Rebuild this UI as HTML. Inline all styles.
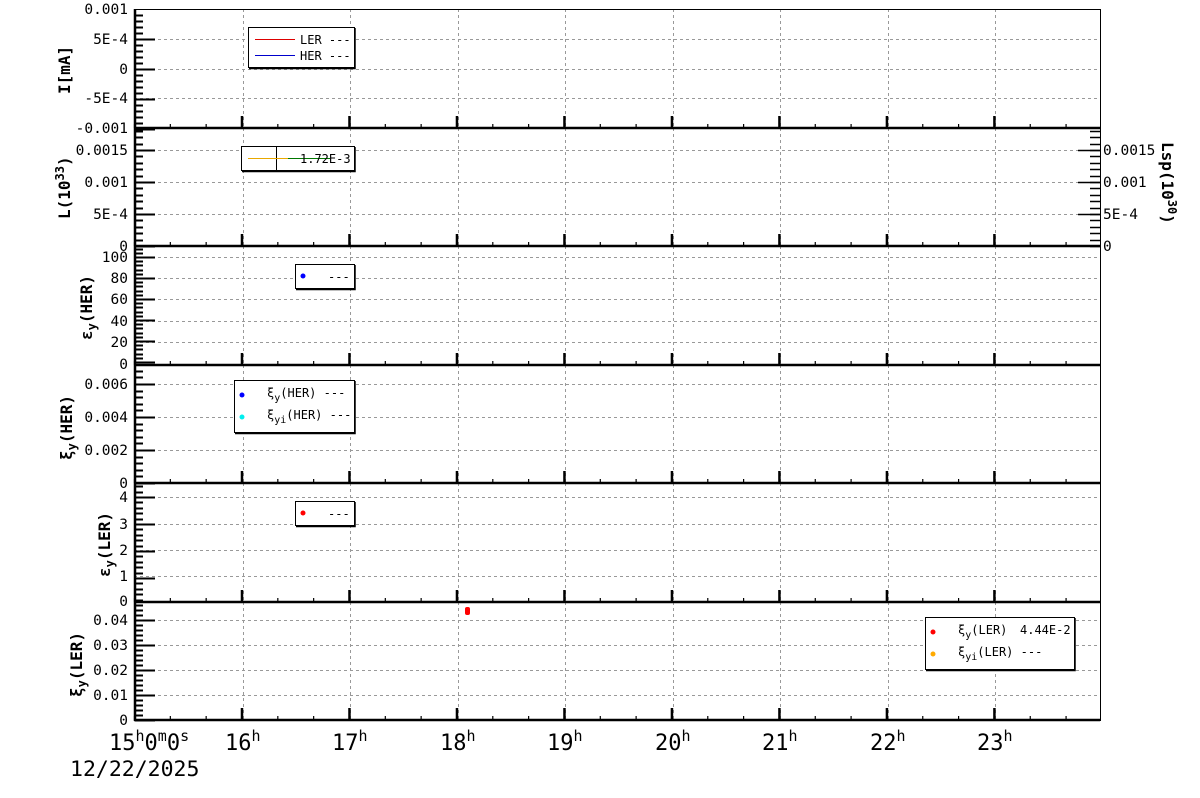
<!DOCTYPE html>
<html><head><meta charset="utf-8"><style>
html,body{margin:0;padding:0;background:#fff;}
svg{display:block;}
text{font-family:"DejaVu Sans Mono","Liberation Mono",monospace;fill:#000;}
.yl{font-size:14.5px;text-anchor:end;}
.yt{font-size:16px;font-weight:bold;}
.lg{font-size:12px;}
.xl{font-size:22px;}
</style></head><body>
<svg id="s" width="1200" height="798" xmlns="http://www.w3.org/2000/svg">
<g id="grid" stroke="#999" stroke-width="1" stroke-dasharray="3,3"></g>
<g id="ticks" stroke="#000"></g>
<rect x="134.5" y="9.5" width="966" height="711" fill="none" stroke="#000" stroke-width="1"/>
<g stroke="#000" stroke-width="2.5">
<line x1="134" y1="128" x2="1100" y2="128"/><line x1="134" y1="246" x2="1100" y2="246"/>
<line x1="134" y1="365" x2="1100" y2="365"/><line x1="134" y1="483" x2="1100" y2="483"/>
<line x1="134" y1="602" x2="1100" y2="602"/><line x1="134" y1="720" x2="1100" y2="720"/>
<line x1="135" y1="9" x2="135" y2="721"/>
</g>
<text class="yl" x="128" y="14">0.001</text><text class="yl" x="128" y="44">5E-4</text>
<text class="yl" x="128" y="74">0</text><text class="yl" x="128" y="103">-5E-4</text><text class="yl" x="128" y="133">-0.001</text>
<text class="yl" x="128" y="155">0.0015</text><text class="yl" x="128" y="187">0.001</text>
<text class="yl" x="128" y="219">5E-4</text><text class="yl" x="128" y="251">0</text>
<text class="yl" x="128" y="262">100</text><text class="yl" x="128" y="283">80</text><text class="yl" x="128" y="304">60</text>
<text class="yl" x="128" y="326">40</text><text class="yl" x="128" y="347">20</text><text class="yl" x="128" y="369">0</text>
<text class="yl" x="128" y="389">0.006</text><text class="yl" x="128" y="422">0.004</text>
<text class="yl" x="128" y="455">0.002</text><text class="yl" x="128" y="488">0</text>
<text class="yl" x="128" y="502">4</text><text class="yl" x="128" y="529">3</text><text class="yl" x="128" y="555">2</text>
<text class="yl" x="128" y="581">1</text><text class="yl" x="128" y="606">0</text>
<text class="yl" x="128" y="625">0.04</text><text class="yl" x="128" y="650">0.03</text>
<text class="yl" x="128" y="675">0.02</text><text class="yl" x="128" y="700">0.01</text><text class="yl" x="128" y="725">0</text>
<text x="1103" y="155" style="font-size:14.5px">0.0015</text><text x="1103" y="187" style="font-size:14.5px">0.001</text>
<text x="1103" y="219" style="font-size:14.5px">5E-4</text><text x="1103" y="251" style="font-size:14.5px">0</text>
<text class="yt" transform="translate(1162,142) rotate(90)">Lsp(10<tspan dy="-6" font-size="12">30</tspan><tspan dy="6">)</tspan></text>
<text class="yt" transform="translate(70,94) rotate(-90)">I[mA]</text>
<text class="yt" transform="translate(70,219) rotate(-90)">L(10<tspan dy="-6" font-size="12">33</tspan><tspan dy="6">)</tspan></text>
<text class="yt" transform="translate(92,340) rotate(-90)">ε<tspan dy="4" font-size="12">y</tspan><tspan dy="-4">(HER)</tspan></text>
<text class="yt" transform="translate(72,460) rotate(-90)">ξ<tspan dy="4" font-size="12">y</tspan><tspan dy="-4">(HER)</tspan></text>
<text class="yt" transform="translate(110,577) rotate(-90)">ε<tspan dy="4" font-size="12">y</tspan><tspan dy="-4">(LER)</tspan></text>
<text class="yt" transform="translate(82,697) rotate(-90)">ξ<tspan dy="4" font-size="12">y</tspan><tspan dy="-4">(LER)</tspan></text>
<text class="xl" x="109" y="750">15<tspan dy="-9" font-size="15">h</tspan><tspan dy="9">0</tspan><tspan dy="-9" font-size="15">m</tspan><tspan dy="9">0</tspan><tspan dy="-9" font-size="15">s</tspan></text>
<text class="xl" x="225" y="750">16<tspan dy="-9" font-size="15">h</tspan></text>
<text class="xl" x="332" y="750">17<tspan dy="-9" font-size="15">h</tspan></text>
<text class="xl" x="440" y="750">18<tspan dy="-9" font-size="15">h</tspan></text>
<text class="xl" x="547" y="750">19<tspan dy="-9" font-size="15">h</tspan></text>
<text class="xl" x="655" y="750">20<tspan dy="-9" font-size="15">h</tspan></text>
<text class="xl" x="762" y="750">21<tspan dy="-9" font-size="15">h</tspan></text>
<text class="xl" x="870" y="750">22<tspan dy="-9" font-size="15">h</tspan></text>
<text class="xl" x="977" y="750">23<tspan dy="-9" font-size="15">h</tspan></text>
<text class="xl" x="70" y="776" style="font-size:21.5px">12/22/2025</text>
<g fill="#fff" stroke="#000" stroke-width="1">
<rect x="248.5" y="27.5" width="106" height="40"/>
<rect x="241.5" y="146.5" width="113" height="24"/>
<rect x="295.5" y="264.5" width="59" height="24"/>
<rect x="234.5" y="380.5" width="120" height="52"/>
<rect x="295.5" y="501.5" width="59" height="24"/>
<rect x="925.5" y="617.5" width="149" height="52"/>
</g>
<g stroke="#000" stroke-width="1.5">
<polyline fill="none" points="355,28 355,68.5 249,68.5"/>
<polyline fill="none" points="355,147 355,171.5 242,171.5"/>
<polyline fill="none" points="355,265 355,289.5 296,289.5"/>
<polyline fill="none" points="355,381 355,433.5 235,433.5"/>
<polyline fill="none" points="355,502 355,526.5 296,526.5"/>
<polyline fill="none" points="1075,618 1075,670.5 926,670.5"/>
</g>
<line x1="255" y1="39.5" x2="295" y2="39.5" stroke="#d00"/>
<line x1="255" y1="55.5" x2="295" y2="55.5" stroke="#00c"/>
<text class="lg" x="300" y="44">LER ---</text><text class="lg" x="300" y="60">HER ---</text>
<line x1="276.5" y1="147" x2="276.5" y2="171" stroke="#000"/>
<line x1="248" y1="158.5" x2="288" y2="158.5" stroke="#e8a800"/>
<line x1="288" y1="158.5" x2="330" y2="158.5" stroke="#070"/>
<text class="lg" x="300" y="163">1.72E-3</text>
<circle cx="303" cy="276" r="2.5" fill="#00f"/><text class="lg" x="328" y="281">---</text>
<circle cx="242" cy="395" r="2.5" fill="#00f"/><circle cx="242" cy="417" r="2.5" fill="#0ee"/>
<text class="lg" x="267" y="397">ξ<tspan dy="4" font-size="10">y</tspan><tspan dy="-4">(HER) ---</tspan></text>
<text class="lg" x="267" y="419">ξ<tspan dy="4" font-size="10">yi</tspan><tspan dy="-4">(HER) ---</tspan></text>
<circle cx="303" cy="513" r="2.5" fill="#f00"/><text class="lg" x="328" y="518">---</text>
<circle cx="933" cy="632" r="2.5" fill="#f00"/><circle cx="933" cy="654" r="2.5" fill="#fa0"/>
<text class="lg" x="958" y="634">ξ<tspan dy="4" font-size="10">y</tspan><tspan dy="-4">(LER)</tspan></text>
<text class="lg" x="1020" y="634">4.44E-2</text>
<text class="lg" x="958" y="656">ξ<tspan dy="4" font-size="10">yi</tspan><tspan dy="-4">(LER) ---</tspan></text>
<rect x="465" y="607" width="5" height="8" rx="2" fill="#f00"/>
</svg>
<script>
var NS="http://www.w3.org/2000/svg";
function L(g,x1,y1,x2,y2,w){var l=document.createElementNS(NS,"line");l.setAttribute("x1",x1);l.setAttribute("y1",y1);l.setAttribute("x2",x2);l.setAttribute("y2",y2);if(w)l.setAttribute("stroke-width",w);document.getElementById(g).appendChild(l);}
var hx=[243,350,458,565,673,780,888,995];
var panels=[[9,128],[128,246],[246,365],[365,483],[483,602],[602,720]];
var ygrid=[[39,69,98],[150,182,214],[257,278,299,321,342],[384,417,450],[497,524,550,576],[620,645,670,695]];
panels.forEach(function(p,i){
 hx.forEach(function(x){L("grid",x+.5,p[0],x+.5,p[1]);});
 ygrid[i].forEach(function(y){L("grid",134,y+.5,1100,y+.5);});
 for(var x=134;x<1100;x+=35.83){var major=hx.some(function(h){return Math.abs(h-x)<3});
  L("ticks",x+.5,p[1],x+.5,p[1]-(major?12:4),major?2.5:1.2);}
 var maj=ygrid[i].slice();maj.push(p[1]);
 var step=(maj[1]-maj[0])/5;
 var y0=maj[0];
 for(var y=y0;y<=p[1]+1;y+=step){var m=Math.abs((y-y0)/step-Math.round((y-y0)/step/5)*5)<0.1;L("ticks",135,Math.round(y)+.5,m?155:143,Math.round(y)+.5,2);}
 for(var y=y0-step;y>p[0];y-=step){L("ticks",135,Math.round(y)+.5,143,Math.round(y)+.5,2);}
});
[150,182,214].forEach(function(y){L("ticks",1078,y+.5,1100,y+.5,1.5);});
for(var y=246;y>128;y-=6.4){L("ticks",1090,Math.round(y)+.5,1100,Math.round(y)+.5,1.5);}
</script>
</body></html>
